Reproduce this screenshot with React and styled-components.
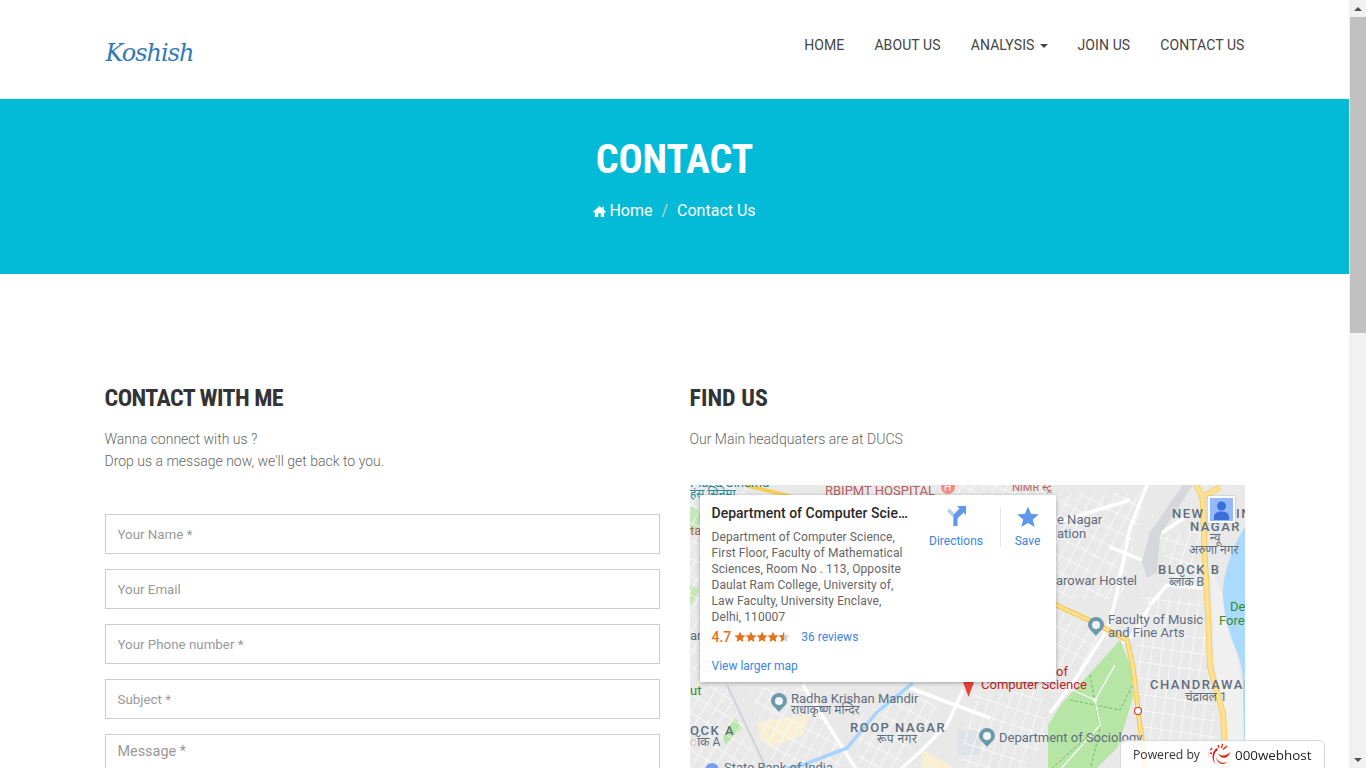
import React from 'react';
import styled, { createGlobalStyle } from 'styled-components';

const Global = createGlobalStyle`
  html { overflow-x: hidden; }
  body { margin: 0; width: 1349px; background: #fff; font-family: Roboto, "Noto Sans", sans-serif; color: #777; }
  * { box-sizing: border-box; }
`;
const Page = styled.div`min-height: 1784px;`;
const Container = styled.div`width: 1170px; margin: 0 auto; padding: 0 15px;`;
const Header = styled.header`height: 99px; background: #fff; border-bottom: 1px solid #eee;`;
const HeaderRow = styled(Container)`display: flex; justify-content: space-between; align-items: flex-start;`;
const Brand = styled.a`
  font: italic 24px "DejaVu Serif", serif; letter-spacing: -1px; color: #337ab7; margin: 38px 0 0 1px; line-height: 30px;
`;
const Nav = styled.nav`display: flex; gap: 30px; margin-top: 35px;`;
const NavItem = styled.a`
  font: 400 14px/20px Roboto, sans-serif; letter-spacing: .1px; color: #444; text-transform: uppercase; display: flex; align-items: center;
`;
const Caret = styled.span`
  display: inline-block; width: 0; height: 0; margin-left: 5px; margin-top: 1px;
  border-top: 4px solid #444; border-left: 4px solid transparent; border-right: 4px solid transparent;
`;
const Banner = styled.section`height: 175px; background: #04bbd7; text-align: center; color: #fff; padding-top: 33px;`;
const BannerTitle = styled.h1`
  margin: 0; font: 700 40px/56px Roboto, sans-serif; font-stretch: 75%; color: #fff; text-transform: uppercase;
`;
const Crumbs = styled.div`
  margin-top: 11px; font: 400 16px/24px Roboto, sans-serif; color: #fff; display: flex; justify-content: center; align-items: center;
`;
const CrumbSep = styled.span`color: #ccc; padding: 0 9px;`;
const HomeIcon = styled.svg`width: 13px; height: 13px; margin-right: 3px; fill: #fff;`;
const Content = styled(Container)`display: grid; grid-template-columns: 555px 555px; gap: 30px; padding-top: 108px;`;
const Column = styled.div`display: flex; flex-direction: column;`;
const SectionTitle = styled.h2`
  margin: 0; font: 700 24px/32px Roboto, sans-serif; font-stretch: 75%; color: #333; text-transform: uppercase; white-space: nowrap;
  letter-spacing: ${p => p.$tracking || 0}px;
`;
const Lead = styled.p`margin: 14px 0 0; font: 300 14px/22px Roboto, sans-serif; color: #666; height: 44px;`;
const Form = styled.form`display: flex; flex-direction: column; gap: 15px; margin-top: 42px;`;
const Field = styled.input`
  width: 100%; height: 40px; border: 1px solid #ccc; padding: 0 12px; font: 400 13.33px Roboto, sans-serif; outline: none; background: #fff;
  &::placeholder { color: #999; opacity: 1; }
`;
const MessageField = styled.textarea`
  width: 100%; height: 150px; border: 1px solid #ccc; padding: 8px 12px; font: 400 14.4px/17px Roboto, sans-serif; outline: none; resize: none; background: #fff;
  &::placeholder { color: #999; opacity: 1; }
`;
const MapFrame = styled.div`position: relative; height: 450px; margin-top: 13px; overflow: hidden; background: #e9e9ea;`;
const MapArt = styled.svg`display: block; width: 555px; height: 450px;`;
const Label = styled.text`
  font-family: Roboto, "Noto Sans", "DejaVu Sans", sans-serif;
  font-size: ${p => p.$size || 13}px;
  font-weight: ${p => p.$weight || 400};
  letter-spacing: ${p => p.$spacing || 0}px;
  fill: ${p => p.$color || '#5f6d7d'};
`;
const Card = styled.div`
  position: absolute; left: 10px; top: 10px; width: 356px; height: 187px; background: #fff;
  box-shadow: 0 1px 4px rgba(0,0,0,.3); padding: 8px 12px; display: flex;
`;
const CardInfo = styled.div`width: 200px; flex: none;`;
const CardTitle = styled.div`
  font: 500 14px/20px Roboto, sans-serif; color: #2a2a2a; white-space: nowrap; overflow: hidden; text-overflow: ellipsis; width: 198px;
`;
const CardAddress = styled.div`margin-top: 6px; font: 400 12px/16px Roboto, sans-serif; letter-spacing: .1px; color: #666;`;
const Rating = styled.div`display: flex; align-items: center; margin-top: 2px; height: 20px;`;
const Score = styled.span`font: 500 14px/20px Roboto, sans-serif; color: #e7711b;`;
const Stars = styled.svg`width: 56px; height: 12px; margin-left: 3px;`;
const Link = styled.a`font: 400 12px/16px Roboto, sans-serif; color: #3a84df;`;
const Reviews = styled(Link)`margin-left: 11px;`;
const LargerMap = styled(Link)`display: block; margin-top: 11px;`;
const CardActions = styled.div`display: flex; margin-left: 1px; padding-top: 2px; align-items: flex-start;`;
const Action = styled.div`display: flex; flex-direction: column; align-items: center; width: ${p => p.$w}px; font: 400 12px/16px Roboto, sans-serif; color: #3a84df;`;
const ActionIcon = styled.svg`width: 24px; height: 24px; margin-bottom: 4px;`;
const ActionRule = styled.div`width: 1px; height: 40px; background: #e6e6e6; margin-top: 2px;`;
const Avatar = styled.div`
  position: absolute; left: 518px; top: 11px; width: 27px; height: 27px; border: 2px solid #fff; background: #94b8f8; box-shadow: 0 0 2px rgba(0,0,0,.25);
`;
const Badge = styled.div`
  position: fixed; left: 1120px; bottom: -1px; width: 205px; height: 29px; background: rgba(255,255,255,.88); border: 1px solid #d8d8d8; border-radius: 6px 6px 0 0;
  display: flex; align-items: center; padding-left: 12px; color: #333; font: 400 12.2px "Open Sans", sans-serif;
`;
const BadgeLogo = styled.svg`width: 24px; height: 24px; margin: 0 4px 0 7px;`;
const BadgeName = styled.span`font: 400 13.4px "Open Sans", sans-serif; color: #222;`;
const Scrollbar = styled.aside`
  position: fixed; right: 0; top: 0; bottom: 0; width: 17px; background: #f1f1f1; display: flex; flex-direction: column; align-items: flex-end;
`;
const ScrollArrow = styled.div`
  width: 16px; height: 17px; display: flex; align-items: center; justify-content: center; flex: none;
  &::before {
    content: ''; width: 0; height: 0; border-left: 4px solid transparent; border-right: 4px solid transparent;
    ${p => p.$down ? 'border-top: 4px solid #505050;' : 'border-bottom: 4px solid #505050;'}
  }
`;
const ScrollThumb = styled.div`width: 16px; height: 316px; background: #c1c1c1; flex: none;`;
const ScrollGap = styled.div`flex: 1;`;

const hatches = [
  { id: 'a', points: '360,8 455,8 432,115 360,112', rot: 28 },
  { id: 'b', points: '60,203 115,203 160,280 85,285', rot: 28 },
  { id: 'c', points: '165,232 225,205 250,225 205,285 170,285', rot: 28 },
  { id: 'd', points: '0,205 36,200 72,285 0,285', rot: 32 },
  { id: 'e', points: '470,52 512,40 512,95 480,95', rot: 18 },
  { id: 'f', points: '450,112 512,112 530,285 458,285 446,175', rot: 8 },
  { id: 'g', points: '365,125 420,150 395,185 360,180', rot: 28 },
  { id: 'h', points: '280,210 350,205 358,255 330,285 270,285', rot: 18 },
  { id: 'i', points: '0,0 9,0 9,200 0,200', rot: 28 },
  { id: 'j', points: '10,0 60,0 60,9 10,9', rot: 28 },
  { id: 'k', points: '265,0 360,0 360,9 265,9', rot: 28 },
];
const mainRoads = [
  'M457 0L440 43L425 117L417 145L385 195L360 228',
  'M460 120L477 100L512 103',
  'M113 200L157 270L167 285',
  'M273 205L257 240L230 267L210 285',
  'M220 203L300 233',
  'M432 158C448 150 452 130 460 122',
  'M420 62L452 75',
  'M365 38L440 15',
  'M472 48L498 30',
];
const Map = () => (
  <MapArt viewBox="0 0 555 450">
    <defs>
      {[8, 18, 28, 32].map(r => (
        <pattern key={r} id={`blocks${r}`} width="10" height="16" patternUnits="userSpaceOnUse" patternTransform={`rotate(${r})`}>
          <path d="M0 .5H10M.5 0V16" stroke="#fff" strokeOpacity=".7" strokeWidth=".9" fill="none" />
        </pattern>
      ))}
    </defs>
    <rect width="555" height="450" fill="#e9e9ea" />
    <path d="M520 80L533 112L546 165L553 205V285H540L525 180Z" fill="#f0f0f1" />
    <path d="M555 42C540 65 532 95 533 112C534 132 540 150 546 165C552 178 553 188 553 205L555 285Z" fill="#aadaff" />
    <path d="M430 155L441 182L443 212L428 262L405 285H358V240L372 218L403 185Z" fill="#b6e5a6" />
    <path d="M45 233L52 243L35 260L33 250Z" fill="#b9e6a9" />
    <path d="M67 237L120 230L113 250L80 262L70 255Z" fill="#f8efd5" />
    <path d="M233 265L268 285H230Z" fill="#f8efd5" />
    <path d="M0 20L12 28L6 48L0 46Z" fill="#c5e8b8" />
    <path d="M0 100L9 104L2 120L0 118Z" fill="#c5e8b8" />
    <path d="M268 245H290V270H268Z" fill="#dfe2e6" />
    <path d="M493 0H503L470 50L467 87L457 93L452 77L460 47Z" fill="#d5d7da" />
    {hatches.map(h => <polygon key={h.id} points={h.points} fill={`url(#blocks${h.rot})`} />)}
    <path d="M37 200L77 285" stroke="#cfd2d6" strokeWidth="2" fill="none" />
    {mainRoads.map(d => <path key={d} d={d} fill="none" stroke="#fff" strokeWidth="3.500" />)}
    <path d="M223 198L187 227L157 263L113 280L90 285" fill="none" stroke="#a6d4ff" strokeWidth="3.500" />
    <path d="M400 190L410 245L400 285M380 215L430 225L445 195M405 245L360 285" fill="none" stroke="#6cbc6c" strokeWidth="1" strokeDasharray="3 2" />
    <path d="M425 180L405 215L410 240L370 285M405 215L360 195" fill="none" stroke="#fff" strokeWidth="1.200" />
    <circle cx="405" cy="215" r="2" fill="#fff" />
    <path d="M506 0C510 8 513 10 513 20L515 78L518 128L520 182L533 228L536 285M513 12L530 2" fill="none" stroke="#f6cf65" strokeWidth="6" />
    <path d="M506 0C510 8 513 10 513 20L515 78L518 128L520 182L533 228L536 285M513 12L530 2" fill="none" stroke="#fde293" strokeWidth="4" />
    <path d="M340 108L403 137L437 155L443 182L448 225L456 285" fill="none" stroke="#f2c84b" strokeWidth="5" />
    <path d="M340 108L403 137L437 155L443 182L448 225L456 285" fill="none" stroke="#fde293" strokeWidth="3" />
    <path d="M55 0L115 15" fill="none" stroke="#f4cf58" strokeWidth="4" />
    <circle cx="258" cy="2" r="7" fill="#f28b82" />
    <Label x="254" y="6" $size={10} $color="#fff">H</Label>
    <circle cx="448" cy="226" r="3.500" fill="#fff" stroke="#d23f31" strokeWidth="1.200" />
    <Label x="135" y="10" $color="#b5605c">RBIPMT HOSPITAL</Label>
    <Label x="0" y="2" $color="#26899c">Plaza Cinema</Label>
    <Label x="0" y="13" $size={12} $color="#26899c">हंस सिनेमा</Label>
    <Label x="322" y="6" $size={11} $color="#b5605c">NIMR स्ट्र</Label>
    <Label x="0" y="50" $color="#b5605c">ta</Label>
    <Label x="0" y="155">ar</Label>
    <Label x="0" y="210" $color="#2f8f2f">ut</Label>
    <Label x="367" y="39">e Nagar</Label>
    <Label x="367" y="53">ation</Label>
    <Label x="366" y="100">arowar Hostel</Label>
    <Label x="418" y="139">Faculty of Music</Label>
    <Label x="418" y="152">and Fine Arts</Label>
    <Label x="482" y="33" $weight={500} $spacing={1.500}>NEW</Label>
    <Label x="546" y="33" $weight={500} $spacing={1.500}>IN</Label>
    <Label x="500" y="46" $weight={500} $spacing={1.500}>NAGAR</Label>
    <Label x="520" y="57" $size={12}>न्यू</Label>
    <Label x="499" y="69" $size={12}>अरुणा नगर</Label>
    <Label x="468" y="89" $weight={500} $spacing={1.500}>BLOCK B</Label>
    <Label x="479" y="101" $size={12}>ब्लॉक B</Label>
    <Label x="540" y="126" $color="#2f8f2f">De</Label>
    <Label x="529" y="140" $color="#2f8f2f">Fore</Label>
    <Label x="460" y="204" $weight={500} $spacing={1.500}>CHANDRAWAL</Label>
    <Label x="495" y="216" $size={12}>चंद्रावल 1</Label>
    <Label x="366" y="191" $color="#c5221f">of</Label>
    <Label x="291" y="204" $color="#c5221f">Computer Science</Label>
    <path d="M284 197h-11l5.500 15z" fill="#ea4335" />
    <Label x="101" y="218">Radha Krishan Mandir</Label>
    <Label x="101" y="229" $size={12}>राधाकृष्ण मन्दिर</Label>
    <Label x="160" y="247" $weight={500} $spacing={1.500}>ROOP NAGAR</Label>
    <Label x="187" y="258" $size={12} $spacing={.5}>रूप नगर</Label>
    <Label x="309" y="257">Department of Sociology</Label>
    <Label x="0" y="250" $weight={500} $spacing={1.500}>OCK A</Label>
    <Label x="0" y="261" $size={12}>ॉक A</Label>
    <Label x="34" y="287">State Bank of India</Label>
    <circle cx="22" cy="285" r="7" fill="#7b9eea" />
    {[[89,216],[406,140],[297,251]].map(([x,y]) => (
      <g key={x}>
        <path d={`M${x-8} ${y}a8 8 0 1 1 16 0c0 4-5 7-8 11c-3-4-8-7-8-11z`} fill="#6d9aaa" />
        <circle cx={x} cy={y} r="4" fill="#fff" opacity=".9" />
      </g>
    ))}
  </MapArt>
);

const star = 'M6 .6l1.600 3.600 3.900.4-2.900 2.600.8 3.800L6 9.100l-3.400 2 .8-3.800L.5 4.600l3.900-.4z';

export default function App() {
  return (
    <Page>
      <Global />
      <Header>
        <HeaderRow>
          <Brand>Koshish</Brand>
          <Nav>
            <NavItem>Home</NavItem>
            <NavItem>About us</NavItem>
            <NavItem>Analysis<Caret /></NavItem>
            <NavItem>Join us</NavItem>
            <NavItem>Contact us</NavItem>
          </Nav>
        </HeaderRow>
      </Header>
      <Banner>
        <BannerTitle>Contact</BannerTitle>
        <Crumbs>
          <HomeIcon viewBox="0 0 14 14"><path d="M7 1L0 7.400l.8.9L2 7.200V13h3.600V9h2.800v4H12V7.200l1.200 1.100.8-.9L11.600 5.200V2H10v1.700z" /></HomeIcon>
          Home<CrumbSep>/</CrumbSep>Contact Us
        </Crumbs>
      </Banner>
      <Content>
        <Column>
          <SectionTitle $tracking={-0.55}>Contact with me</SectionTitle>
          <Lead>Wanna connect with us ?<br />Drop us a message now, we'll get back to you.</Lead>
          <Form>
            <Field placeholder="Your Name *" />
            <Field placeholder="Your Email" />
            <Field placeholder="Your Phone number *" />
            <Field placeholder="Subject *" />
            <MessageField placeholder="Message *" />
          </Form>
        </Column>
        <Column>
          <SectionTitle>Find us</SectionTitle>
          <Lead>Our Main headquaters are at DUCS</Lead>
          <MapFrame>
            <Map />
            <Card>
              <CardInfo>
                <CardTitle>Department of Computer Science, Delhi</CardTitle>
                <CardAddress>Department of Computer Science,<br />First Floor, Faculty of Mathematical<br />Sciences, Room No . 113, Opposite<br />Daulat Ram College, University of,<br />Law Faculty, University Enclave,<br />Delhi, 110007</CardAddress>
                <Rating>
                  <Score>4.7</Score>
                  <Stars viewBox="0 0 56 12">
                    {[0,11,22,33].map(x => <path key={x} transform={`translate(${x} 0)`} d={star} fill="#e7711b" />)}
                    <path transform="translate(44 0)" d={star} fill="#d0d0d0" />
                    <path transform="translate(44 0)" d="M6 .6L4.400 4.200.5 4.600l2.900 2.700-.8 3.800L6 9.100z" fill="#e7711b" />
                  </Stars>
                  <Reviews>36 reviews</Reviews>
                </Rating>
                <LargerMap>View larger map</LargerMap>
              </CardInfo>
              <CardActions>
                <Action $w={87}>
                  <ActionIcon viewBox="0 0 24 24">
                    <path d="M3 6l2.500-2.500L13 11v10H9.500v-8.500z" fill="#b3cff5" />
                    <path d="M9.500 21v-8.500c0-3 1.500-4.500 3-6L15.500 3.500 13 1h9v9l-2.500-2.500-3 3c-1.500 1.500-3 2-3 4V21z" fill="#5f97ea" />
                  </ActionIcon>
                  Directions
                </Action>
                <ActionRule />
                <Action $w={54}>
                  <ActionIcon viewBox="0 0 24 24"><path d="M12 1.500l3 7.300 7.800.6-6 5.100 1.900 7.600L12 18l-6.700 4.100 1.900-7.600-6-5.100 7.800-.6z" fill="#5f97ea" /></ActionIcon>
                  Save
                </Action>
              </CardActions>
            </Card>
            <Avatar>
              <svg viewBox="0 0 23 23" width="23" height="23"><circle cx="11.500" cy="8" r="4.500" fill="#3b6fd8" /><path d="M4 22v-3c0-3.500 3-5.500 7.500-5.500S19 15.500 19 19v3z" fill="#3b6fd8" /></svg>
            </Avatar>
          </MapFrame>
        </Column>
      </Content>
      <Badge>
        Powered by
        <BadgeLogo viewBox="0 0 24 24">
          <path d="M2 14C1 10 2 7 5 5" fill="none" stroke="#f3c9c6" strokeWidth="1" />
          <path d="M10 5C5 8 4 15 8 21C6 14 7 9 11 7Z" fill="#d9261c" />
          <path d="M11 10C14 14 20 13 23 9C22 16 13 17 11 10Z" fill="#d9261c" />
          <path d="M9 14C11 19 15 21 20 19C16 23 10 21 9 14Z" fill="#e5352b" />
          <path d="M11 2L12 5M15.500 1L14.500 5M20 3L16 6.500M5 5L3.500 7M3 10L5 10.500" stroke="#d9261c" strokeWidth="1.300" />
        </BadgeLogo>
        <BadgeName>000webhost</BadgeName>
      </Badge>
      <Scrollbar>
        <ScrollArrow />
        <ScrollThumb />
        <ScrollGap />
        <ScrollArrow $down />
      </Scrollbar>
    </Page>
  );
}
